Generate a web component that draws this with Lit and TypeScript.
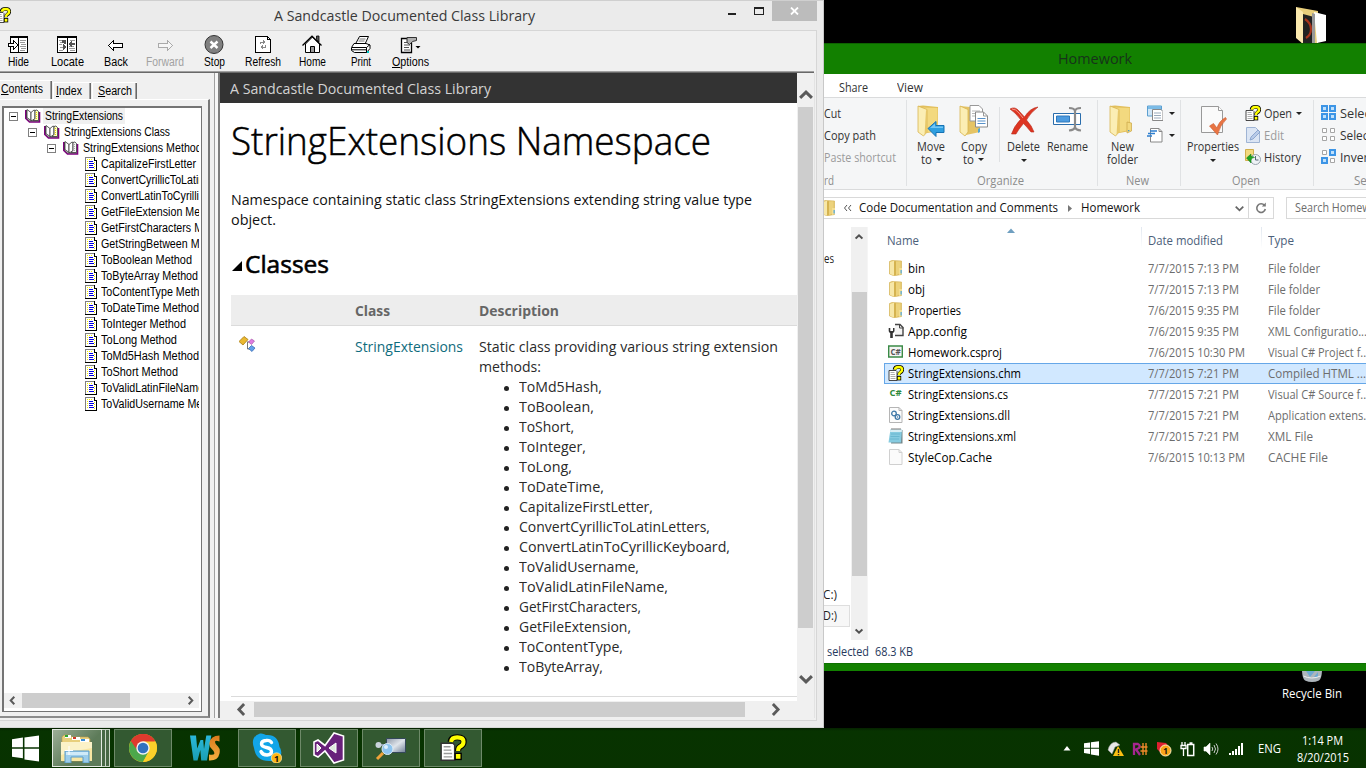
import { LitElement, html, css, svg, nothing } from "lit";
import { customElement, property } from "lit/decorators.js";
import { styleMap } from "lit/directives/style-map.js";

/* Text run condensed or widened to a given advance width. */
@customElement("fit-text")
class FitText extends LitElement {
  @property({ type: Number }) w = 0;
  @property({ type: Number }) s = 1;
  static styles = css`
    :host { display: inline-block; white-space: pre; vertical-align: top; text-align: left; }
    .run { display: inline-block; transform-origin: 0 50%; }
  `;
  firstUpdated() {
    const run = this.renderRoot.querySelector(".run") as HTMLElement;
    const natural = run.getBoundingClientRect().width;
    const k = this.w ? this.w / natural : this.s;
    run.style.transform = `scaleX(${k})`;
    this.style.width = `${natural * k}px`;
  }
  render() {
    return html`<span class="run"><slot></slot></span>`;
  }
}

const t = (text: unknown, w = 0, s = 0.94) => html`<fit-text .w=${w} .s=${s}>${text}</fit-text>`;

/* ---------- icons ---------- */
const icon = (w: number, h: number, body: unknown, vb = `0 0 ${w} ${h}`) =>
  html`<svg width=${w} height=${h} viewBox=${vb} style="display:block;flex:none">${body}</svg>`;

const helpBody = svg`
  <path d="M1 5.500h7l1 1V15.500H1z" fill="#fff" stroke="#333" stroke-width=".9"/>
  <path d="M2.500 7.500h4M2.500 9.500h4.500M2.500 11.500h5M2.500 13.500h5" stroke="#999" stroke-width=".8"/>
  <path d="M6.500 4.600Q6.800 1.900 10.500 1.900Q14.300 1.900 14.300 4.600Q14.300 6.500 12.200 7.500Q11 8.200 11 10.200" fill="none" stroke="#000" stroke-width="3.600"/>
  <path d="M8.900 11h4.300v4.400H8.900z" fill="#000"/>
  <path d="M6.900 4.700Q7.100 2 10.500 2Q14.200 2 14.200 4.600Q14.200 6.500 12.200 7.400Q11 8 11 10" fill="none" stroke="#ff0" stroke-width="2.400"/>
  <path d="M9.700 11.800h2.700v2.800H9.700z" fill="#ff0"/>`;

const folder16 = icon(16, 16, svg`
  <path d="M1.500 1.500L4 .5 13.500 1v13.500L6 15.800 1.500 14z" fill="#e3c469" stroke="#d2ae4c" stroke-width=".6"/>
  <path d="M2 2l4-1.200V15.500L2 14z" fill="#f7e7a8"/>
  <path d="M6 1.500L8 1v14l-2 .5z" fill="#d5b350"/>
  <path d="M8 1.500l4.500-.3V13L8 15z" fill="#ecd27c"/>
  <path d="M11 8h3v5.500L11 15z" fill="#f3df95"/><path d="M12.500 10h1.300v3.500h-1.300z" fill="#59aadb"/>`);

const bigFolder = svg`
  <path d="M3 2L8 1.500 23 3v24l-16 3z" fill="#e2bf5c"/>
  <path d="M8 3.500L22.500 4v22L9 29z" fill="#f3d97f"/>
  <path d="M3 2l9 3.500V28L8.500 32 3 28z" fill="#fbeeb4" stroke="#d8b552" stroke-width=".8"/>
  <path d="M11 6l1 .5V28L9.500 31z" fill="#e7c869"/>`;

const moveTo = icon(32, 34, svg`${bigFolder}
  <path d="M13 24.500l8-7v4h8v7h-8v4z" fill="#2f9fe0" stroke="#1672b4"/><path d="M15 24l5-4.500v3h8v1.500z" fill="#72c6f5"/>`);
const copyTo = icon(32, 34, svg`<path d="M2 2l20 2v24l-14 3-6-3z" fill="#e5c465"/><path d="M2 2l8 3.500V28l-3 4-5-4z" fill="#fbeeb4" stroke="#d8b552" stroke-width=".8"/>
  <path d="M12 1.500h9l3.500 3.500v12H12z" fill="#fff" stroke="#999"/><path d="M14 7h8M14 9.500h8M14 12h8" stroke="#b7b7b7"/>
  <path d="M17.500 8h8L29.500 12v11h-12z" fill="#fff" stroke="#8a8a8a"/><path d="M25.500 8v4h4" fill="none" stroke="#999"/>
  <path d="M19.500 14.500h8M19.500 17h8M19.500 19.500h8" stroke="#5791c9"/><path d="M20 25l2-1v4l-2 1z" fill="#4ea6d8"/>`);
const del = icon(32, 31, svg`<g transform="translate(0 1)"><path d="M2 4Q7 1 11 6l5.500 6Q22 3 30 2Q22 8 18.500 15Q24 21 26 27L23 27Q19 22 15.500 18.500Q10 25 8 29L3.500 29Q6 21 12.500 14.500Q8 8 2 4z" fill="#dd3522" stroke="#b92a1a" stroke-width=".6"/>
  <path d="M4 4q4 0 7 4l4 5" fill="none" stroke="#f39a8c" stroke-width="1"/></g>`);
const rename = icon(32, 31, svg`<g transform="translate(-1 1)"><path d="M2.500 8.500h27v11h-27z" fill="#fff" stroke="#2a6dac"/><path d="M5.500 11h13v6h-13z" fill="#4c9be0" stroke="#2f78bb"/>
  <path d="M18 3q5.500 0 6 3v16q-.5 3-6 3.500M30 3q-5.500 0-6 3v16q.5 3 6 3.500" fill="none" stroke="#8a8a8a" stroke-width="2.200"/></g>`);
const newFolder = icon(32, 34, svg`${bigFolder}<path d="M20 18l4.500 1v8l-4.500 2z" fill="#f3d97f" stroke="#c8a545" stroke-width=".7"/><path d="M21 26l2 .5-2 1z" fill="#2e8fd0"/>`);
const newItem = icon(16, 16, svg`<path d="M.5 1h14v10H.5z" fill="#cfe6f7" stroke="#5b9fd0"/><path d="M1 1h13v3H1z" fill="#7bbbe6"/><path d="M5.500 4.500H14l2 2v9H5.500z" fill="#fff" stroke="#888"/><path d="M7 8h7M7 10.500h7M7 13h7" stroke="#9ab"/>`);
const easyAccess = icon(16, 16, svg`<path d="M3.500 1.500H12l3 3v10.500H3.500z" fill="#fff" stroke="#888"/><path d="M12 1.500v3h3" fill="none" stroke="#888"/><path d="M3 4h7M1 6.500h7M0 9h5" stroke="#2e7fd0" stroke-width="1.400"/>`);
const properties = icon(28, 32, svg`<path d="M2.500 2.500h17l4 4v22h-21z" fill="#fafafa" stroke="#999"/><path d="M19.500 2.500v4h4" fill="#fff" stroke="#999"/>
  <path d="M10.500 22l4-2.500 3.500 4.500Q20 17 26.500 13.500L27.500 15Q21 21 18.500 31z" fill="#e87443" stroke="#c95a2f" stroke-width=".6"/>`);
const help16 = icon(16, 16, helpBody);
const edit = icon(16, 16, svg`<path d="M1.500.5h9l4 4v11h-13z" fill="#dbe5f4" stroke="#9fb4d4"/><path d="M5 13l1-3 7-7 2 2-7 7z" fill="#b9cbe8" stroke="#7f9cc8" stroke-width=".8"/>`);
const history = icon(16, 16, svg`<path d="M.5.5h8v11h-8z" fill="#f3d97f" stroke="#d0ae4c"/><circle cx="10.500" cy="10.500" r="5" fill="#eef2f5" stroke="#98a4ac"/><path d="M10.500 7v4h3" fill="none" stroke="#567"/><path d="M1.500 9l4.500-4v2.500q3 0 3.500 1-3-.5-3.500 3v2.500z" fill="#1fa321" stroke="#0d7a10" stroke-width=".5"/>`);
const sq = (x: number, y: number, on: boolean) => on
  ? svg`<path d=${`M${x} ${y}h7v7h-7z`} fill="#3d95e6"/><path d=${`M${x + 2} ${y + 2}h3v3h-3z`} fill="#bfe0fb"/>`
  : svg`<path d=${`M${x + 1.5} ${y + 1.5}h4v4h-4z`} fill="#fff" stroke="#a5a5a5"/>`;
const selIcon = (a: boolean, b: boolean, c: boolean, d: boolean) => icon(16, 16, svg`${sq(0, 0, a)}${sq(8, 0, b)}${sq(0, 8, c)}${sq(8, 8, d)}`);

const wrench = icon(16, 16, svg`<path d="M7 1.500h5l3 3v8H7" fill="#f4f4f4" stroke="#444" stroke-width="1.400"/><path d="M11.500 1v4h4" fill="none" stroke="#444"/><path d="M.7 5v3q0 1.500 1.500 2v5h2.600v-5Q6.500 9.500 6.500 8V5H5v3H2.300V5z" fill="#333"/>`);
const mini = (s: string, fill: string, x: number, y: number, size: number) => svg`<text x=${x} y=${y} font-family="Open Sans, sans-serif" font-weight="700" font-size=${size} fill=${fill}>${s}</text>`;
const csproj = icon(16, 16, svg`<path d="M.7 2h13.600v11H.7z" fill="#f4f4f4" stroke="#3a8a46" stroke-width="1.400"/>${mini("C#", "#555", 2.500, 10.500, 8)}`);
const cs = icon(16, 16, mini("C#", "#2f8a3c", 1.500, 10, 9.5));
const page = svg`<path d="M1.500.5h9.500l3 3V15.500h-12.500z" fill="#fcfcfc" stroke="#b5b5b5"/><path d="M11 .5v3h3" fill="none" stroke="#b5b5b5"/>`;
const dll = icon(16, 16, svg`${page}<circle cx="6" cy="6.500" r="2.300" fill="none" stroke="#3f78a8" stroke-width="1.300"/><circle cx="9.500" cy="10" r="2.300" fill="none" stroke="#3f78a8" stroke-width="1.300"/><circle cx="9.500" cy="10" r=".8" fill="#3f78a8"/>`);
const notepad = icon(16, 16, svg`<path d="M4 2h10.500v13.500H3z" fill="#75878a"/><path d="M2.500 1h11.500l-1 13.500H.5z" fill="#86cbe0"/><path d="M2.500 1H14l-.3 3H2z" fill="#d9eef4"/><path d="M3 6h9M2.500 8.500h9M2 11h9" stroke="#5fb0c8" stroke-width=".7"/><path d="M4 0v2M6 0v2M8 0v2M10 0v2M12 0v2" stroke="#555" stroke-width=".8"/>`);
const blank = icon(16, 16, svg`<path d="M1.500.5h9.500l3 3V15.500h-12.500z" fill="#fbfbfb" stroke="#d0d0d0"/><path d="M11 .5v3h3" fill="none" stroke="#d0d0d0"/>`);

const chev = (dir: string, size = 10, c = "#5a5a5a", sw = 2.2) => {
  const d: Record<string, string> = { up: "M.8 7L5 3L9.200 7", down: "M.8 3L5 7L9.200 3", left: "M7 .8L3 5L7 9.200", right: "M3 .8L7 5L3 9.200" };
  return icon(size, size, svg`<path d=${d[dir]} fill="none" stroke=${c} stroke-width=${sw}/>`, "0 0 10 10");
};

/* ---------- HTML Help window ---------- */
const tb = (b: unknown) => html`<svg width="22" height="20" viewBox="0 0 22 20" shape-rendering="crispEdges" style="display:block">${b}</svg>`;
const tools: [string, unknown, number, boolean?][] = [
  ["Hide", tb(svg`<path d="M3.500 1.500h17v16h-17z" fill="#fff" stroke="#000"/><path d="M3 2.500h18" stroke="#000"/><path d="M11.500 2v16" stroke="#000"/><path d="M13 5.500h6M13 7.500h5M14 9.500h5M13 11.500h6M14 13.500h5M13 15.500h5" stroke="#999"/><path d="M1.500 8.500h5v-3l4.500 4.500-4.500 4.500v-3h-5z" fill="#fff" stroke="#000"/>`), 21],
  ["Locate", tb(svg`<path d="M1.500 1.500h19v16h-19z" fill="#fff" stroke="#000"/><path d="M1 2.500h20M11.500 2v16" stroke="#000"/><path d="M3 5.500h3M4 7.500h3M3 9.500h3M4 12.500h4M3 15.500h4M13 13.500h6M14 15.500h5M14 5.500h5M13 11.500h5" stroke="#999"/><path d="M6 5h2v3H6zM16 8h3v2h-3zM12 9l4-3v6zM10 12l-3-3v6zM8 5h2v4H8z" fill="#555"/>`), 33],
  ["Back", tb(svg`<path d="M3.500 10.500l5-5v3h9v4h-9v3z" fill="#fff" stroke="#000"/>`), 24],
  ["Forward", tb(svg`<path d="M18.500 10.500l-5-5v3h-9v4h9v3z" fill="#f6f6f6" stroke="#aaa"/>`), 38, true],
  ["Stop", icon(22, 20, svg`<circle cx="11" cy="9.500" r="9" fill="#808080" stroke="#333"/><path d="M7.500 6.500l7 6.500M14.500 6.500l-7 6.500" stroke="#fff" stroke-width="2.400"/>`), 21],
  ["Refresh", tb(svg`<path d="M3.500 1.500h12l3 3v13h-15z" fill="#fff" stroke="#000"/><path d="M15.500 1.500v3h3" fill="none" stroke="#000"/><path d="M8.500 9V7h3M13.500 10v2h-3" fill="none" stroke="#888"/><path d="M11 4.500l3 2.500-3 2.500zM11 9.500l-3 2.500 3 2.500z" fill="#888"/>`), 36],
  ["Home", icon(22, 20, svg`<path d="M4.500 9v8.500h14V9L11.500 2z" fill="#fff" stroke="#000"/><path d="M1.500 10.500L11 1.200 20.500 10.500" fill="none" stroke="#000" stroke-width="1.300"/><path d="M15.500 1h2.500v6l-2.500-2.500z" fill="#555" stroke="#000" stroke-width=".8"/><path d="M9.500 11.500h4v6h-4z" fill="#999" stroke="#000"/>`), 27],
  ["Print", icon(22, 20, svg`<path d="M6 8l3.500-6.500h9L15.500 8" fill="#fff" stroke="#000"/><path d="M9.500 4h6M8.500 6h6" stroke="#777"/><path d="M4 8.500h12l4 1.500v3.500l-3.500 4h-12l-3-2v-3z" fill="#fff" stroke="#000"/><path d="M2 12.500h14.500L20 9.500M2 14.800h14M16.500 12.500v5" fill="none" stroke="#000"/><path d="M17 16h2v2h-2z" fill="#0cc"/>`), 20],
  ["Options", icon(22, 20, svg`<path d="M2.500 3.500h10v14h-10z" fill="#fff" stroke="#000" stroke-width="1.300"/><path d="M5 7.500h5M5 10h6M5 12.500h5M5 15h6" stroke="#555"/><path d="M8 2.500h9.500v3l-4 1-3 3-2.500-2z" fill="#b0b0b0" stroke="#333"/><path d="M16.500 11h5l-2.500 2.500z" fill="#000"/>`), 37],
];
const expander = html`<svg class="exp" width="9" height="9" shape-rendering="crispEdges"><path d="M.5.5h8v8h-8z" fill="#fff" stroke="#808080"/><path d="M2 4.500h5" stroke="#000"/></svg>`;
const book = (yellow: boolean) => html`<svg class="book" width="16" height="16" viewBox="0 0 16 16"><path d="M.8 2v8.500L4.500 14H14.500V4" fill="none" stroke="#800080" stroke-width="1.600"/><path d="M1.500 2v8L4.500 13H14" fill="none" stroke="#222" stroke-width=".6"/><path d="M2 1.500L6 4.500V12.500L2 9.500z" fill="#fff" stroke="#333" stroke-width=".8"/><path d="M6 4.500L9 2l1 .5V10.500L7 12.500H6z" fill="#fff" stroke="#333" stroke-width=".8"/><path d="M10 2.500q2-1.500 3.500 1V12.500H8l2-2z" fill=${yellow ? "#ffffc4" : "#f7f7f7"} stroke="#333" stroke-width=".8"/><path d="M11.500 4v7" stroke=${yellow ? "#e8d800" : "#aaa"} stroke-dasharray="1 1"/></svg>`;
const topic = html`<svg class="topic" width="13" height="16" shape-rendering="crispEdges"><path d="M0 1h10v1h1v1h1v12H0z" fill="#fff"/><path d="M.5 1v14M0 1.500h9" stroke="#808080" fill="none"/><path d="M9.500 1v3M9 4.500h3M11.500 4v11M0 14.500h12" stroke="#000" fill="none"/><path d="M2 3.500h6M2.500 5v8M9.500 6v7" stroke="#f5f000" stroke-dasharray="1 1"/><path d="M4 5.500h4M4 7.500h5M4 9.500h4M4 11.500h5" stroke="#0000e0"/></svg>`;

const topics: [string, number][] = [
  ["CapitalizeFirstLetter Method", 0], ["ConvertCyrillicToLatinLetters Method", 0], ["ConvertLatinToCyrillicKeyboard Method", 0],
  ["GetFileExtension Method", 0], ["GetFirstCharacters Method", 0], ["GetStringBetween Method", 0], ["ToBoolean Method", 91],
  ["ToByteArray Method", 97], ["ToContentType Method", 0], ["ToDateTime Method", 98], ["ToInteger Method", 85], ["ToLong Method", 76],
  ["ToMd5Hash Method", 98], ["ToShort Method", 77], ["ToValidLatinFileName Method", 0], ["ToValidUsername Method", 0],
];
const methods: [string, number][] = [
  ["ToMd5Hash,", 83], ["ToBoolean,", 75], ["ToShort,", 55], ["ToInteger,", 67], ["ToLong,", 53], ["ToDateTime,", 85],
  ["CapitalizeFirstLetter,", 134], ["ConvertCyrillicToLatinLetters,", 191], ["ConvertLatinToCyrillicKeyboard,", 211],
  ["ToValidUsername,", 120], ["ToValidLatinFileName,", 149], ["GetFirstCharacters,", 122], ["GetFileExtension,", 112],
  ["ToContentType,", 104], ["ToByteArray,", 84],
];

@customElement("help-window")
class HelpWindow extends LitElement {
  static styles = css`
    :host { display: flex; flex-direction: column; box-sizing: border-box; background: #ebebeb; border-top: 1px solid #cfcfcf; border-right: 1px solid #c8c8c8; border-bottom: 1px solid #d8d8d8; font-family: "Open Sans", sans-serif; overflow: hidden; }
    .title { height: 29px; display: flex; align-items: flex-start; }
    .appicon { margin: 6px 0 0 -5px; width: 16px; }
    .caption { width: 262px; margin-left: 263px; font-size: 14.5px; line-height: 30px; color: #3a3a3a; }
    .min { width: 8px; height: 2px; background: #222; margin: 12px 0 0 192px; }
    .max { width: 8px; height: 5px; border: 1px solid #222; border-top-width: 2px; margin: 6px 0 0 18px; }
    .close { width: 45px; height: 20px; background: #bcbcbc; margin-left: 8px; display: flex; align-items: center; justify-content: center; }
    .client { width: 816px; height: 689px; border: 1px solid #d6d6d6; border-left: 0; display: flex; flex-direction: column; background: #f0f0f0; }
    .tools { height: 40px; display: flex; margin-left: -6.5px; font: 12px/16px "Liberation Sans", sans-serif; }
    .tool { width: 49px; display: flex; flex-direction: column; align-items: center; padding-top: 4px; box-sizing: border-box; }
    .tool fit-text { margin-top: -1px; }
    .tool.off { color: #a2a2a2; }
    .rule { height: 1px; background: #a0a0a0; margin-right: 2px; }
    .rule.dark { background: #696969; }
    .body { display: flex; height: 645px; }
    .nav { width: 214px; box-sizing: border-box; display: flex; flex-direction: column; font: 12px/16px "Liberation Sans", sans-serif; color: #000; }
    .tabs { height: 26px; display: flex; align-items: flex-end; }
    .tab { height: 17px; box-sizing: border-box; border-top: 1px solid #fff; box-shadow: inset -1px 0 #696969, inset -2px 0 #a0a0a0; padding: 0 0 0 2px; width: 38px; }
    .tab.on { width: 52px; height: 19px; padding: 0 0 0 1px; }
    .tab + .tab { margin-left: 1px; border-left: 1px solid #fff; }
    .tab.wide { width: 45px; padding-left: 5px; }
    .panel { height: 620px; width: 210px; box-sizing: border-box; border-top: 1px solid #fff; border-right: 2px solid #777; border-bottom: 2px solid #8c8c8c; padding: 6px 0 0 2px; }
    .box { width: 200px; height: 606px; box-sizing: border-box; border: 2px solid #747474; border-right-width: 1px; border-bottom-width: 1px; background: #fff; display: flex; flex-direction: column; padding-right: 2px; }
    .tree { height: 585px; overflow: hidden; }
    .row { height: 16px; display: flex; align-items: flex-start; white-space: nowrap; }
    .row .exp { margin: 4px 0 0 5px; flex: none; }
    .row .book { margin: 0 2px 0 7px; flex: none; }
    .row .topic { margin: 0 3px 0 81px; flex: none; }
    .l1 .exp { margin-left: 24px; } .l2 .exp { margin-left: 43px; }
    .name { padding: 0 2px; height: 16px; }
    .name.sel { background: #f0f0f0; }
    .topic + .name { padding-left: 0; }
    .hbar { height: 15px; background: #f0f0f0; display: flex; align-items: center; justify-content: space-between; padding: 0 4px; margin-bottom: 2px; }
    .hthumb { width: 108px; height: 15px; background: #cdcdcd; margin-right: 52px; }
    .split { width: 6px; box-sizing: border-box; border-left: 1px solid #a0a0a0; border-right: 2px solid #7d7d7d; background: #f6f6f6; }
    .right { width: 594px; height: 645px; display: grid; grid-template-columns: 577px 17px; grid-template-rows: 628px 17px; border-right: 1px solid #e3e3e3; }
    .doc { background: #fff; overflow: hidden; color: #111; font-size: 14.5px; line-height: 20px; }
    .doc header { height: 30px; background: #333; color: #d3d3d3; padding-left: 10px; line-height: 31px; }
    .page { padding-left: 11px; }
    h1 { font-size: 38px; font-weight: 300; line-height: 50px; margin: 12px 0 0; color: #000; -webkit-text-stroke: .5px #000; }
    .intro { margin: 25px 0 0; }
    .intro div { height: 20px; }
    h2 { font-size: 24.5px; font-weight: 400; line-height: 34px; margin: 17px 0 0; display: flex; align-items: center; color: #000; -webkit-text-stroke: .6px #000; }
    h2 svg { margin: 4px 3px 0 1px; }
    .grid { display: grid; grid-template-columns: 124px 124px 1fr; }
    .head { margin-top: 14px; height: 30px; line-height: 31px; background: #ededed; border-bottom: 1px solid #dbdbdb; font-weight: 700; color: #666; width: 566px; }
    .cells { height: 371px; border-bottom: 1px solid #dbdbdb; padding-top: 11px; box-sizing: border-box; color: #2a2a2a; }
    .cells svg { margin: -1px 0 0 8px; }
    .link { color: #0f6c7d; }
    ul { list-style: none; margin: 0; padding: 0 0 0 25px; }
    li { height: 20px; display: flex; align-items: center; }
    li::before { content: ""; width: 5px; height: 5px; border-radius: 50%; background: #222; margin-right: 10px; margin-top: 2px; }
    .desc div { height: 20px; }
    .vbar { background: #f0f0f0; display: flex; flex-direction: column; align-items: center; padding-top: 15px; box-sizing: border-box; }
    .vthumb { width: 15px; height: 521px; background: #cdcdcd; margin: 5px 0 44px 1px; align-self: flex-start; }
    .wide-h { grid-column: 1 / 3; background: #f0f0f0; display: flex; align-items: center; padding-left: 15px; }
    .wthumb { width: 491px; height: 15px; background: #cdcdcd; margin: 0 24px 0 6px; }
  `;
  render() {
    const u = (s: string) => html`<u>${s[0]}</u>${s.slice(1)}`;
    return html`
      <div class="title">
        <div class="appicon">${help16}</div>
        <div class="caption">${t("A Sandcastle Documented Class Library", 261)}</div>
        <div class="min"></div><div class="max"></div>
        <div class="close">${icon(9, 8, svg`<path d="M1 .5l7 7M8 .5l-7 7" stroke="#fff" stroke-width="1.800"/>`)}</div>
      </div>
      <div class="client">
        <div class="tools">${tools.map(([n, ic, w, off]) => html`<div class="tool ${off ? "off" : ""}">${ic}${t(n === "Options" ? u(n) : n, w)}</div>`)}</div>
        <div class="rule"></div><div class="rule dark"></div>
        <div class="body">
          <div class="nav">
            <div class="tabs">
              <div class="tab on">${t(u("Contents"), 42)}</div>
              <div class="tab">${t(u("Index"), 26)}</div>
              <div class="tab wide">${t(u("Search"), 34)}</div>
            </div>
            <div class="panel"><div class="box">
              <div class="tree">
                <div class="row">${expander}${book(true)}<span class="name sel">${t("StringExtensions", 78)}</span></div>
                <div class="row l1">${expander}${book(true)}<span class="name">${t("StringExtensions Class", 106)}</span></div>
                <div class="row l2">${expander}${book(false)}<span class="name">${t("StringExtensions Methods", 0, 0.89)}</span></div>
                ${topics.map(([n, w]) => html`<div class="row">${topic}<span class="name">${t(n, w, 0.89)}</span></div>`)}
              </div>
              <div class="hbar">${chev("left", 9)}<div class="hthumb"></div>${chev("right", 9)}</div>
            </div></div>
          </div>
          <div class="split"></div>
          <div class="right">
            <div class="doc">
              <header>${t("A Sandcastle Documented Class Library", 261)}</header>
              <div class="page">
                <h1>${t("StringExtensions Namespace", 480)}</h1>
                <div class="intro"><div>${t("Namespace containing static class StringExtensions extending string value type", 521)}</div><div>${t("object.", 45)}</div></div>
                <h2>${icon(10, 10, svg`<path d="M10 0v10H0z" fill="#000"/>`)}${t("Classes", 84)}</h2>
                <div class="grid head"><span></span>${t("Class", 35)}${t("Description", 80)}</div>
                <div class="grid cells">
                  <div>${icon(17, 17, svg`<path d="M8 6h4M8.500 6v7h4" fill="none" stroke="#777"/><path d="M0 5.500l5-5 4 3-5 5.500z" fill="#eab931" stroke="#a97b10" stroke-width=".8"/><path d="M9.500 6l3-3 3 2-3 3.500z" fill="#e07ce0" stroke="#9a4a9a" stroke-width=".6"/><path d="M9.500 12.500l3-3 3.500 2.500-3 3.500z" fill="#62a1ea" stroke="#2d62ad" stroke-width=".7"/>`)}</div>
                  <div class="link">${t("StringExtensions", 108)}</div>
                  <div class="desc">
                    <div>${t("Static class providing various string extension", 299)}</div>
                    <div>${t("methods:", 62)}</div>
                    <ul>${methods.map(([m, w]) => html`<li>${t(m, w)}</li>`)}</ul>
                  </div>
                </div>
              </div>
            </div>
            <div class="vbar">${chev("up", 14)}<div class="vthumb"></div>${chev("down", 14)}</div>
            <div class="wide-h">${chev("left", 13)}<div class="wthumb"></div>${chev("right", 13)}</div>
          </div>
        </div>
      </div>`;
  }
}

/* ---------- File Explorer ---------- */
type FileRow = [unknown, string, number, string, number, string, number];
const files: FileRow[] = [
  [folder16, "bin", 17, "7/7/2015 7:13 PM", 91, "File folder", 52],
  [folder16, "obj", 17, "7/7/2015 7:13 PM", 91, "File folder", 52],
  [folder16, "Properties", 53, "7/6/2015 9:35 PM", 91, "File folder", 52],
  [wrench, "App.config", 59, "7/6/2015 9:35 PM", 91, "XML Configuratio...", 99],
  [csproj, "Homework.csproj", 94, "7/6/2015 10:30 PM", 97, "Visual C# Project f...", 101],
  [help16, "StringExtensions.chm", 113, "7/7/2015 7:21 PM", 91, "Compiled HTML ...", 98],
  [cs, "StringExtensions.cs", 100, "7/7/2015 7:21 PM", 91, "Visual C# Source f...", 101],
  [dll, "StringExtensions.dll", 102, "7/7/2015 7:21 PM", 91, "Application extens...", 104],
  [notepad, "StringExtensions.xml", 108, "7/7/2015 7:21 PM", 91, "XML File", 45],
  [blank, "StyleCop.Cache", 84, "7/6/2015 10:13 PM", 97, "CACHE File", 60],
];
const caret = html`<i class="caret"></i>`;

@customElement("explorer-window")
class ExplorerWindow extends LitElement {
  static styles = css`
    :host { display: flex; flex-direction: column; background: #fff; font: 12px/16px "Open Sans", sans-serif; color: #1e1e1e; overflow: hidden; }
    .cap { height: 31px; background: #128000; border-top: 1px solid #0d6200; font-size: 14.5px; line-height: 30px; padding-left: 234px; color: #16331a; box-sizing: border-box; }
    .tabs { height: 23px; display: flex; line-height: 27px; padding-left: 15px; gap: 29px; color: #333; border-bottom: 1px solid #dadbdc; }
    .ribbon { height: 91px; background: #f5f6f7; display: flex; border-bottom: 1px solid #dadbdc; color: #333; }
    .group { box-sizing: border-box; border-right: 1px solid #e0e2e4; height: 86px; margin-top: 2px; display: flex; flex-direction: column; flex: none; }
    .items { height: 73px; display: flex; flex: none; }
    .label { color: #8c8c8c; text-align: center; height: 13px; line-height: 16px; margin-left: -3px; }
    .col { display: flex; flex-direction: column; padding-top: 5px; }
    .line { height: 22px; display: flex; align-items: flex-start; }
    .line > svg { margin-right: 3px; }
    .line > fit-text { margin-top: 1px; margin-left: -.5px; }
    .big { display: flex; flex-direction: column; align-items: center; padding-top: 4px; line-height: 13px; }
    .big .pic { height: 36px; display: flex; align-items: flex-start; flex: none; }
    .big .two { display: flex; align-items: center; height: 13px; }
    .caret { display: inline-block; width: 0; height: 0; border: 3px solid transparent; border-top-color: #222; border-bottom: 0; margin-left: 4px; }
    .caret.alone { margin: 2px 0 0; }
    .line .caret { margin-top: 7px; }
    .line svg + .caret { margin-left: 3px; }
    .dim { color: #9b9b9b; }
    .vline { width: 1px; height: 55px; background: #dfe1e3; margin: 7px 0 0; }
    .address { height: 37px; display: flex; padding-top: 7px; box-sizing: border-box; color: #111; }
    .crumbs { width: 449px; height: 20px; border: 1px solid #d9d9d9; border-left: 0; display: flex; align-items: center; flex: none; }
    .crumbs > svg:first-child { margin-left: -3px; }
    .refresh { width: 25px; height: 20px; border-left: 1px solid #d9d9d9; display: flex; align-items: center; justify-content: center; margin-left: 4px; box-sizing: border-box; }
    .search { margin-left: 12px; border: 1px solid #d9d9d9; height: 20px; width: 90px; flex: none; padding-left: 8px; line-height: 20px; color: #6d6d6d; }
    .main { display: flex; height: 413px; }
    .tree { width: 27px; flex: none; display: flex; flex-direction: column; }
    .tree .a { margin-top: 24px; height: 16px; }
    .tree .b { margin-top: 320px; height: 18px; }
    .tree .d { height: 22px; width: 26px; box-sizing: border-box; border: 1px solid #dedede; border-left: 0; background: #f7f7f7; line-height: 20px; }
    .tree .d fit-text, .tree .b fit-text { margin-left: -1px; }
    .bar { width: 17px; flex: none; background: #f0f0f0; border-right: 1px solid #f5f5f5; display: flex; flex-direction: column; align-items: center; padding-top: 6px; box-sizing: border-box; height: 413px; }
    .bar div { width: 15px; height: 284px; background: #cdcdcd; margin: 51px 0; flex: none; }
    .list { flex: 1; min-width: 0; padding-left: 16px; }
    .cols { height: 31px; display: grid; grid-template-columns: 257px 120px 1fr; color: #4c607a; line-height: 27px; background: linear-gradient(#e2e8f0, #fff) 257px 0 / 1px 22px no-repeat, linear-gradient(#e2e8f0, #fff) 377px 0 / 1px 22px no-repeat; }
    .cols .n { padding-left: 3px; display: flex; }
    .cols .n svg { margin: 1px 0 0 88px; }
    .cols .c { padding-left: 7px; }
    .row { height: 21px; line-height: 22px; display: grid; grid-template-columns: 24px 240px 120px 120px; box-sizing: border-box; overflow: hidden; color: #6d6d6d; }
    .row svg { margin: 2px 0 0 4px; }
    .row .f { color: #000; }
    .row.sel { background: #d1e8ff; box-shadow: inset 1px 1px #66a7e8, inset 0 -1px #66a7e8; }
    .status { height: 23px; line-height: 24px; display: flex; gap: 6px; padding-left: 3px; color: #26395c; width: 97px; }
    .edge { height: 8px; background: #128000; border-top: 1px solid #0d7000; box-sizing: border-box; }
  `;
  render() {
    const W = (w: number) => styleMap({ width: `${w}px` });
    const big = (w: number, pic: unknown, a: unknown, b: unknown) => html`<div class="big" style=${W(w)}><div class="pic">${pic}</div>${a}<div class="two">${b}</div></div>`;
    return html`
      <div class="cap">${t("Homework", 74)}</div>
      <div class="tabs">${t("Share", 29)}${t("View", 26)}</div>
      <div class="ribbon">
        <div class="group" style=${W(83)}>
          <div class="items"><div class="col"><div class="line">${t("Cut", 17)}</div><div class="line">${t("Copy path", 52)}</div><div class="line dim">${t("Paste shortcut", 72)}</div></div></div>
          <div class="label" style=${W(16)}>${t("rd", 10)}</div>
        </div>
        <div class="group" style=${W(191)}>
          <div class="items">
            ${big(48, moveTo, t("Move", 28), html`${t("to", 11)}${caret}`)}
            ${big(37, copyTo, t("Copy", 26), html`${t("to", 11)}${caret}`)}
            <div style=${W(7)}></div><div class="vline"></div>
            ${big(47, del, t("Delete", 33), html`<i class="caret alone"></i>`)}
            ${big(41, rename, t("Rename", 41), nothing)}
          </div>
          <div class="label">${t("Organize", 47)}</div>
        </div>
        <div class="group" style=${W(83)}>
          <div class="items">
            ${big(49, newFolder, t("New", 23), t("folder", 31))}
            <div class="col"><div class="line">${newItem}${caret}</div><div class="line">${easyAccess}${caret}</div></div>
          </div>
          <div class="label">${t("New", 23)}</div>
        </div>
        <div class="group" style=${W(133)}>
          <div class="items">
            ${big(64, properties, t("Properties", 52), html`<i class="caret alone"></i>`)}
            <div class="col"><div class="line">${help16}${t("Open", 28)}${caret}</div><div class="line dim">${edit}${t("Edit", 20)}</div><div class="line">${history}${t("History", 37)}</div></div>
          </div>
          <div class="label">${t("Open", 28)}</div>
        </div>
        <div class="group" style=${W(116)}>
          <div class="items"><div class="col" style="padding-left:7px">
            <div class="line">${selIcon(true, true, true, true)}${t("Select all", 52)}</div>
            <div class="line">${selIcon(false, false, false, false)}${t("Select none", 64)}</div>
            <div class="line">${selIcon(false, true, true, false)}${t("Invert selection", 86)}</div>
          </div></div>
          <div class="label">${t("Select", 32)}</div>
        </div>
      </div>
      <div class="address">
        <div class="crumbs">
          ${folder16}
          <span style="width:6px"></span>${icon(10, 8, svg`<path d="M4 1L1.500 4 4 7M8 1L5.500 4 8 7" fill="none" stroke="#555"/>`)}<span style="width:6px"></span>
          ${t("Code Documentation and Comments", 199)}
          <span style="width:10px"></span>${icon(5, 7, svg`<path d="M0 0l4 3.500L0 7z" fill="#777"/>`)}<span style="width:8px"></span>
          ${t("Homework", 59)}
          <span style="width:95px"></span>${chev("down", 9, "#666", 2)}
          <div class="refresh">${icon(12, 12, svg`<path d="M9.500 3.500A4.300 4.300 0 1 0 10.300 7" fill="none" stroke="#777" stroke-width="1.600"/><path d="M10.800.5v4H6.800z" fill="#777"/>`)}</div>
        </div>
        <div class="search">${t("Search Homework", 92)}</div>
      </div>
      <div class="main">
        <div class="tree"><div class="a">${t("es", 10)}</div><div class="b">${t("C:)", 14)}</div><div class="d">${t("D:)", 14)}</div></div>
        <div class="bar">${chev("up", 8, "#505050", 2.500)}<div></div>${chev("down", 8, "#505050", 2.500)}</div>
        <div class="list">
          <div class="cols"><div class="n">${t("Name", 32)}${icon(8, 5, svg`<path d="M4 .5L8 5H0z" fill="#6f9fc0"/>`)}</div><div class="c">${t("Date modified", 75)}</div><div class="c">${t("Type", 26)}</div></div>
          ${files.map(([ic, n, w, d, dw, ty, tw]) => html`<div class="row ${n.endsWith(".chm") ? "sel" : ""}">${ic}<span class="f">${t(n, w)}</span>${t(d, dw)}${t(ty, tw)}</div>`)}
        </div>
      </div>
      <div class="status">${t("selected", 42)}${t("68.3 KB", 38)}</div>
      <div class="edge"></div>`;
  }
}

/* ---------- Taskbar ---------- */
const winLogo = (s: number) => icon(s, s, svg`<path d="M0 3.500L10.500 2v9.300H0zM12 1.800L26 0v11.300H12zM0 12.800h10.500V22L0 20.500zM12 12.800h14V25L12 23z" fill="#fff"/>`, "0 0 26 25");
const taskFolder = icon(34, 30, svg`<path d="M2 4l2-2h6l2 2h16l2 2v22H2z" fill="#e8cf7c" stroke="#b89b4a" stroke-width=".6"/><path d="M5 2h6v3H5z" fill="#fff"/><path d="M5 2h3v2H5z" fill="#2ca52c"/><path d="M12 4h8v3h-8z" fill="#fff"/><path d="M13 4h3v2h-3z" fill="#d03a2a"/><path d="M20 6h9v3h-9z" fill="#fff"/><path d="M21 6h4v2h-4z" fill="#3a8ed8"/><path d="M1 9h31v19H1z" fill="#f7e6a2"/><path d="M1 9h31v6q-16 2-31 7z" fill="#fbf2c8"/><path d="M5 18h24v12h-6v-6H11v6H5z" fill="#9ccdea" stroke="#5a9cc8"/><path d="M6 19h22v3H6z" fill="#cfeaf8"/><path d="M9 13v9M5 17.500h8" stroke="#fff" stroke-width="1"/>`);
const chrome = icon(28, 28, svg`<circle cx="14" cy="14" r="14" fill="#f9c613"/><path d="M14 14L1.900 7A14 14 0 0 1 26.100 7z" fill="#dd3a2e"/><path d="M14 14L1.900 7A14 14 0 0 0 14 28l5-9z" fill="#4ca84b"/><path d="M14 7.500H26.400A14 14 0 0 0 1.900 7L8 16z" fill="#dd3a2e"/><path d="M20 17L14 28A14 14 0 0 0 26.400 7.500H14z" fill="#fbd02a"/><circle cx="14" cy="14" r="6.700" fill="#f3f3f3"/><circle cx="14" cy="14" r="5.300" fill="#3272c0"/>`);
const webstorm = icon(30, 26, svg`<defs><linearGradient id="wa" x2="0" y2="1"><stop offset="0" stop-color="#2ab8dc"/><stop offset="1" stop-color="#1a9fb4"/></linearGradient><linearGradient id="wb" x2="0" y2="1"><stop offset="0" stop-color="#dd7a1c"/><stop offset="1" stop-color="#f5b040"/></linearGradient></defs>
  <path d="M0 .5h6l1.200 13L10.500 5h2.700l.8 9L16.300.5h5L17 25.500h-5.800L10.300 15 7.500 25.500H3.500z" fill="url(#wa)"/>
  <path d="M29.500.5v6q-4.500-1.500-4.500.5 0 2 3 4.500 2.500 2.500 1.500 7-1.500 7.500-10.500 7v-6q5 1 5.500-1.200 0-1.800-2.500-4-3-2.800-2.500-6.300Q20.500.5 29.500.5z" fill="url(#wb)"/>`);
const skype = icon(30, 30, svg`<path d="M8 .5Q11 0 14 2Q26 1 27.500 14Q30 17 29 22Q26 30 19 28Q4 29 2 15Q-2 4 8 .5z" fill="#12a5e8"/>
  <path d="M19.500 9.500q-1.500-2.500-5.500-2-4.500.3-4.500 3.500 0 2.500 5 3.500t5 4q0 3.300-4.500 3.500-4.500 0-6-3.500" fill="none" stroke="#fff" stroke-width="3.400" stroke-linecap="round"/>
  <circle cx="24.500" cy="25" r="5.200" fill="#fdb515" stroke="#fff3c8" stroke-width=".6"/>${mini("1", "#111", 22, 28.500, 9)}`);
const vs = icon(34, 32, svg`<path d="M2 10l4-2 7 5.500L22 1l9.500 3v24L22 31 13 19l-7 6-4-2z" fill="#68217a" stroke="#fff" stroke-width="1.600"/><path d="M5 12v8l4-4zM24 11v10l-7-5z" fill="#dfe9dc" stroke="#fff"/>`);
const inspector = icon(32, 26, svg`<defs><linearGradient id="mg" x2="1" y2="1"><stop offset="0" stop-color="#8d98a8"/><stop offset=".5" stop-color="#dfe4ea"/><stop offset="1" stop-color="#6f7f95"/></linearGradient></defs><path d="M11.500 3.500h19v14h-19z" fill="url(#mg)" stroke="#34485a"/><path d="M3 10h9" stroke="#8ea0b0" stroke-width="2"/><circle cx="3.500" cy="10" r="3" fill="#c9d3dc"/><path d="M8 18l-6 6" stroke="#f0a33a" stroke-width="3"/><circle cx="12.500" cy="14" r="5.500" fill="#8cc4ef" stroke="#dcebf5"/><circle cx="11" cy="12" r="2" fill="#dff1fd"/>`);

@customElement("task-bar")
class TaskBar extends LitElement {
  static styles = css`
    :host { display: flex; justify-content: space-between; background: linear-gradient(#052200, #073300 3px, #083200); font: 12px/17px "Open Sans", sans-serif; color: #fff; box-sizing: border-box; padding-top: 1px; }
    .apps, .tray { display: flex; }
    .btn { width: 58px; height: 38px; margin-right: 4px; box-sizing: border-box; border: 1px solid #6e8a69; background: #335931; display: flex; align-items: center; justify-content: center; }
    .start { width: 52px; padding-left: 12px; box-sizing: border-box; display: flex; align-items: center; }
    .active { width: 50px; background: linear-gradient(135deg, #9cae97, #5d7b59 60%); border-color: #e4eae2; margin-right: 0; }
    .stack { width: 4px; height: 38px; box-sizing: border-box; border: 1px solid #cbd6c8; border-left: 0; background: #476744; }
    .stack.last { margin-right: 4px; }
    .flat { background: none; border-color: transparent; }
    .tray { align-items: center; padding-right: 17px; }
    .tray svg { margin-right: 8px; }
    .clock { width: 53px; display: flex; flex-direction: column; align-items: center; padding-top: 1px; }
    .lang { margin: 0 15px 0 6px; }
  `;
  render() {
    return html`
      <div class="apps">
        <div class="start">${winLogo(27)}</div>
        <div class="btn active">${taskFolder}</div><div class="stack"></div><div class="stack last"></div>
        <div class="btn">${chrome}</div><div class="btn flat">${webstorm}</div><div class="btn">${skype}</div><div class="btn">${vs}</div><div class="btn">${inspector}</div>
        <div class="btn">${icon(28, 28, helpBody, "0 0 16 16.5")}</div>
      </div>
      <div class="tray">
        ${icon(14, 5, svg`<path d="M5 0L8.500 4.500H1.500z" fill="#fff"/>`)}
        ${winLogo(15)}
        ${icon(17, 16, svg`<path d="M1 9q2-8 8-8l4 3-5 2-3 7z" fill="#e8e8e8" stroke="#999" stroke-width=".5"/><path d="M11 5l6 10H6z" fill="#fbbf12"/><path d="M11.500 8v4M11.500 13v1.200" stroke="#222" stroke-width="1.400"/>`)}
        ${icon(16, 14, svg`<path d="M2 13V2h4q2.500 1 1 4L4 7.500 8 13" fill="none" stroke="#a5268f" stroke-width="2.300"/><path d="M11 1v12M14 1v12M8.500 5h7M8.500 9h7" stroke="#f08a2a" stroke-width="1.400"/>`)}
        ${icon(16, 16, svg`<path d="M1 1l9 1 3 4-8 6-4-4z" fill="#e01f2f"/><circle cx="9.500" cy="9.500" r="5.500" fill="#f9a61a" stroke="#fff0c0"/>${mini("1", "#111", 7.300, 12.500, 8)}`)}
        ${icon(15, 16, svg`<path d="M1 4.500h5v3H1zM2 1v3M5 1v3M3.500 7v8" fill="none" stroke="#fff" stroke-width="1.300"/><path d="M7.700 3.500h6v11h-6zM9.500 2h3" fill="none" stroke="#fff" stroke-width="1.500"/>`)}
        ${icon(17, 14, svg`<path d="M1 5h2l4-4v12L3 9H1z" fill="#fff" stroke="#fff" stroke-width=".6"/><path d="M9 5q1.500 2 0 4M11 3q3 4 0 8M13 1.500q4 5.500 0 11" fill="none" stroke="#ccc"/>`)}
        ${icon(16, 14, svg`<path d="M1 11h2v2H1zM4 9h2v4H4zM7 7h2v6H7zM10 4h2v9h-2zM13 1h2v12h-2z" fill="#fff"/>`)}
        <span class="lang">${t("ENG", 23)}</span>
        <div class="clock">${t("1:14 PM", 41)}${t("8/20/2015", 52)}</div>
      </div>`;
  }
}

@customElement("app-root")
class AppRoot extends LitElement {
  static styles = css`
    :host { display: block; position: relative; width: 1366px; height: 768px; background: #000; overflow: hidden; font: 12px/16px "Open Sans", sans-serif; }
    help-window, explorer-window, task-bar, .shortcut, .bin { position: absolute; }
    explorer-window { left: 824px; top: 43px; width: 542px; height: 628px; }
    help-window { left: 0; top: 0; width: 824px; height: 728px; }
    task-bar { left: 0; top: 728px; width: 1366px; height: 40px; }
    .shortcut { left: 1294px; top: 6px; }
    .bin { left: 1282px; top: 671px; width: 60px; display: flex; flex-direction: column; align-items: center; color: #fff; }
    .bin fit-text { margin-top: 3px; }
  `;
  render() {
    return html`
      <div class="shortcut">${icon(36, 38, svg`<path d="M2 1l22 4v33H8z" fill="#e9cf7c"/><path d="M9 8l11 3v27H9z" fill="#222"/><path d="M11 13q6 4 6 10t-5 9" fill="none" stroke="#a8341c" stroke-width="2.200"/><path d="M20 6l12 3v26l-9 2z" fill="#fff"/><path d="M18 7l3 1v29l-3 0z" fill="#999"/><path d="M2 1l7 5v32l-7-6z" fill="#fbe9ae"/>`)}</div>
      <div class="bin">${icon(20, 12, svg`<path d="M0 0h20q-.5 8-3 9.500-7 3-14 0Q.5 8 0 0z" fill="#aeb6bc"/><path d="M4 0l4 6 5-6zM12 6l4-5v5z" fill="#6fa9d2"/><path d="M1.500 5q8 4 17 0" fill="none" stroke="#eee"/>`)}${t("Recycle Bin", 60)}</div>
      <explorer-window></explorer-window>
      <help-window></help-window>
      <task-bar></task-bar>`;
  }
}
